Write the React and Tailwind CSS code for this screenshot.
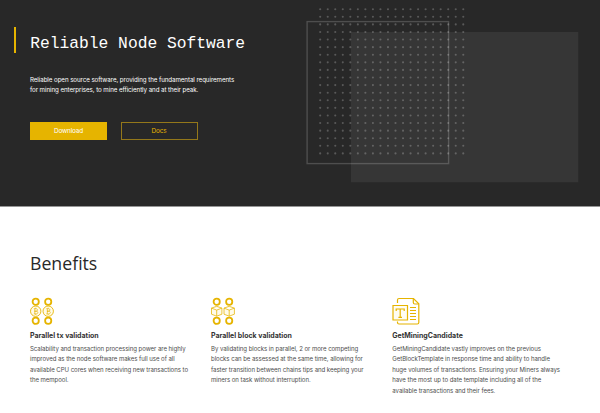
import React from "react";

const benefits = [
  {
    title: "Parallel tx validation",
    icon: CoinsIcon,
    lines: [
      "Scalability and transaction processing power are highly",
      "improved as the node software makes full use of all",
      "available CPU cores when receiving new transactions to",
      "the mempool.",
    ],
  },
  {
    title: "Parallel block validation",
    icon: BlocksIcon,
    lines: [
      "By validating blocks in parallel, 2 or more competing",
      "blocks can be assessed at the same time, allowing for",
      "faster transition between chains tips and keeping your",
      "miners on task without interruption.",
    ],
  },
  {
    title: "GetMiningCandidate",
    icon: TemplateIcon,
    lines: [
      "GetMiningCandidate vastly improves on the previous",
      "GetBlockTemplate in response time and ability to handle",
      "huge volumes of transactions. Ensuring your Miners always",
      "have the most up to date template including all of the",
      "available transactions and their fees.",
    ],
  },
];

function CoinsIcon() {
  return (
    <svg width="26" height="30" viewBox="0 0 26 30" fill="none" stroke="#e6b400">
      {[5.7, 18.2].map((x) => (
        <g key={x}>
          <circle cx={x} cy="4.7" r="3.1" strokeWidth="1.8" />
          <circle cx={x} cy="23.8" r="3.1" strokeWidth="1.8" />
          <circle cx={x} cy="14.2" r="5.2" strokeWidth="0.9" fill="#fffbea" />
          <path
            d={`M${x - 1.9} 11.7h2.2c2 0 2 2.500 0 2.500h-1.500h1.700c2.200 0 2.200 2.700 0 2.700h-2.400M${x - 0.9} 11.7v5.2M${x} 10.7v1M${x} 16.9v1`}
            strokeWidth="0.65"
          />
        </g>
      ))}
    </svg>
  );
}

function BlocksIcon() {
  return (
    <svg width="26" height="30" viewBox="0 0 26 30" fill="none" stroke="#e6b400">
      {[5.7, 18.2].map((x) => (
        <g key={x}>
          <circle cx={x} cy="4.7" r="3.1" strokeWidth="1.8" />
          <circle cx={x} cy="23.8" r="3.1" strokeWidth="1.8" />
          <path
            d={`M${x} 9.3l5.2 1.8v6.100l-5.200 2l-5.200-2v-6.100zM${x - 5.2} 11.1l5.200 2l5.200-2M${x} 13.100v6.100`}
            strokeWidth="0.75"
            strokeLinejoin="round"
            fill="#fffbea"
          />
        </g>
      ))}
    </svg>
  );
}

function TemplateIcon() {
  return (
    <svg width="30" height="30" viewBox="0 0 30 30" fill="none" stroke="#e6b400" strokeWidth="1.2">
      <path d="M5.500 6V3q0-1.500 1.500-1.500H21.500l5.300 5.300V25.500q0 1.500-1.500 1.500H7q-1.500 0-1.500-1.500V24.500" />
      <path d="M21.300 1.700V5.500q0 1.500 1.500 1.500H26.700" />
      <path d="M1 8.500h14.500v14.500H1z" fill="#fffdf3" />
      <path d="M4.200 14v-2h8v2M8.200 12v8.300M6.400 20.300h3.600" />
      <path d="M18 10.500h6M18 13.500h6M18 16.500h6M18 19.500h6M18 22.500h6" strokeWidth="1" />
    </svg>
  );
}

function HeroArt() {
  const steps = Array.from({ length: 20 }, (_, i) => i);
  return (
    <svg className="block" width="300" height="206" viewBox="300 0 300 206" fill="none">
      <rect x="351" y="32" width="227.300" height="150.300" fill="#363636" />
      {steps.map((r) =>
        steps.map((c) => (
          <circle key={`${r}-${c}`} cx={320.2 + c * 7.53} cy={9.2 + r * 7.59} r="1.05" fill="#fff" opacity="0.23" />
        ))
      )}
      <rect x="307.100" y="21.600" width="141.500" height="142" stroke="#fff" strokeOpacity="0.18" strokeWidth="1.400" />
    </svg>
  );
}

export default function App() {
  return (
    <div className="h-[413px] w-[600px] overflow-hidden bg-white font-['Inter',sans-serif]">
      <header className="flex h-[207px] border-b border-[#969696] bg-[#282828]">
        <div className="flex w-[300px] flex-col">
          <div className="mt-[27px] flex h-[26px] items-center pl-[14px]">
            <span className="h-[26px] w-[2.400px] bg-[#e6b400]" />
            <h1 className="ml-[13.800px] mt-[7px] whitespace-nowrap font-['Liberation_Mono',monospace] text-[16.300px] leading-[22px] text-white">
              Reliable Node Software
            </h1>
          </div>
          <p className="ml-[30px] mt-[22px] whitespace-nowrap text-[6.200px] leading-[10.400px] tracking-[-0.068px] text-white">
            <span className="block">Reliable open source software, providing the fundamental requirements</span>
            <span className="block">for mining enterprises, to mine efficiently and at their peak.</span>
          </p>
          <div className="ml-[30px] mt-[26px] flex gap-[13.500px] text-[6.400px] tracking-[-0.150px]">
            <button className="flex h-[18px] w-[77px] items-center justify-center bg-[#e6b400] pt-px text-white">Download</button>
            <button className="flex h-[18px] w-[77px] items-center justify-center border border-[#94781a] pt-px text-[#e6b400]">Docs</button>
          </div>
        </div>
        <HeroArt />
      </header>
      <main className="px-[30px] pt-[42px]">
        <h2 className="font-['Open_Sans',sans-serif] text-[17.700px] leading-[28px] text-[#282828]">Benefits</h2>
        <div className="mt-[20px] grid grid-cols-[181px_181.300px_181px]">
          {benefits.map(({ title, icon: Icon, lines }) => (
            <section key={title}>
              <div className="h-[30px]">
                <Icon />
              </div>
              <h3 className="mt-[4px] whitespace-nowrap text-[7px] font-bold leading-[10px] text-[#333333]">{title}</h3>
              <p className="mt-[3px] whitespace-nowrap text-[6.050px] leading-[10.400px] tracking-[-0.042px] text-[#4d4d4d]">
                {lines.map((line) => (
                  <span key={line} className="block">
                    {line}
                  </span>
                ))}
              </p>
            </section>
          ))}
        </div>
      </main>
    </div>
  );
}
